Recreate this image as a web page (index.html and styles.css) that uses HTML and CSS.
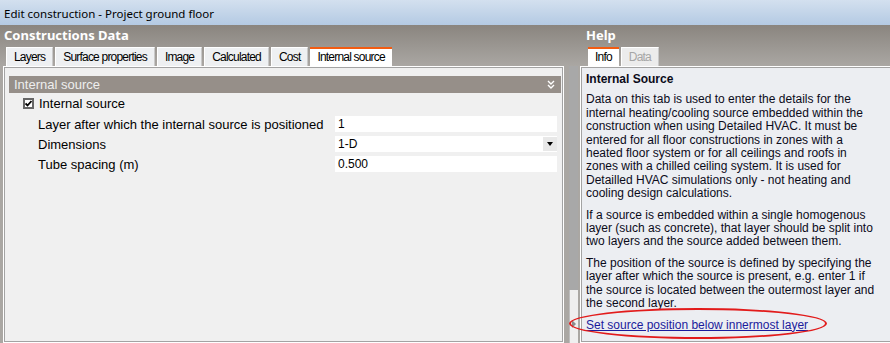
FILE: index.html
```html
<!DOCTYPE html>
<html lang="en">

<head>
    <meta charset="UTF-8">
    <title>Edit construction - Project ground floor</title>
    <link rel="stylesheet" href="styles.css">
</head>

<body>
    <div class="titlebar">Edit construction - Project ground floor</div>
    <div class="main">
        <section class="pane pane-left">
            <h2 class="pane-title">Constructions Data</h2>
            <ul class="tabs">
                <li>Layers</li>
                <li>Surface properties</li>
                <li>Image</li>
                <li>Calculated</li>
                <li>Cost</li>
                <li class="active">Internal source</li>
            </ul>
            <div class="panel">
                <div class="section-bar">
                    <span>Internal source</span>
                    <svg class="chev" width="8" height="9" viewBox="0 0 8 9">
                        <polyline points="1,1 4,4 7,1" />
                        <polyline points="1,5 4,8 7,5" />
                    </svg>
                </div>
                <div class="check-row">
                    <span class="box">
                        <svg width="7" height="7" viewBox="0 0 7 7">
                            <polyline points="0.5,3.5 2.5,5.5 6.5,1" />
                        </svg>
                    </span>
                    <span>Internal source</span>
                </div>
                <div class="row">
                    <span class="lbl">Layer after which the internal source is positioned</span>
                    <div class="field">1</div>
                </div>
                <div class="row">
                    <span class="lbl">Dimensions</span>
                    <div class="field select">1-D<span class="drop"></span></div>
                </div>
                <div class="row">
                    <span class="lbl">Tube spacing (m)</span>
                    <div class="field">0.500</div>
                </div>
            </div>
        </section>
        <div class="splitter">
            <div class="thumb"></div>
            <div class="track"><span class="arrow"></span></div>
        </div>
        <section class="pane pane-right">
            <h2 class="pane-title">Help</h2>
            <ul class="tabs">
                <li class="active">Info</li>
                <li class="disabled">Data</li>
            </ul>
            <div class="panel help">
                <h3>Internal Source</h3>
                <p>Data on this tab is used to enter the details for the<br>
                    internal heating/cooling source embedded within the<br>
                    construction when using Detailed HVAC. It must be<br>
                    entered for all floor constructions in zones with a<br>
                    heated floor system or for all ceilings and roofs in<br>
                    zones with a chilled ceiling system. It is used for<br>
                    Detailled HVAC simulations only - not heating and<br>
                    cooling design calculations.</p>
                <p>If a source is embedded within a single homogenous<br>
                    layer (such as concrete), that layer should be split into<br>
                    two layers and the source added between them.</p>
                <p>The position of the source is defined by specifying the<br>
                    layer after which the source is present, e.g. enter 1 if<br>
                    the source is located between the outermost layer and<br>
                    the second layer.</p>
                <a href="#">Set source position below innermost layer</a>
            </div>
        </section>
    </div>
    <div class="mark"></div>
</body>

</html>
```

FILE: styles.css
```css
html,
body {
    margin: 0;
    padding: 0;
}

body {
    position: relative;
    width: 890px;
    height: 343px;
    overflow: hidden;
    font: 12px "Liberation Sans", Arial, sans-serif;
    color: #000;
    background: #aaa7a3;
}

.titlebar {
    height: 25px;
    box-sizing: border-box;
    padding: 5px 0 0 4px;
    font: 11.5px "Noto Sans", sans-serif;
    line-height: 17px;
    background: linear-gradient(#d3e0ef, #b4cae3);
}

.main {
    display: flex;
    height: 318px;
    background: linear-gradient(#8a857f, #aaa7a3 41px, #aaa7a3);
}

.pane {
    display: flex;
    flex-direction: column;
    flex-shrink: 0;
}

.pane-left {
    width: 567px;
}

.pane-right {
    width: 330px;
}

.pane-title {
    margin: 0;
    height: 22px;
    padding-left: 4px;
    font: bold 13px "Noto Sans", sans-serif;
    line-height: 20px;
    color: #fff;
}

.pane-right .pane-title {
    padding-left: 6px;
}

.tabs {
    display: flex;
    gap: 2px;
    list-style: none;
    margin: 0;
    padding: 0 0 0 6px;
    height: 19px;
}

.pane-right .tabs {
    padding-left: 8px;
}

.tabs li {
    box-sizing: border-box;
    height: 19px;
    padding: 1px 7px 0;
    background: #eef0f2;
    border: 1px solid #fff;
    border-bottom: none;
    border-right-color: #c9c9c9;
    line-height: 17px;
    letter-spacing: -0.8px;
}

.tabs li.active {
    background: #fff;
    border: none;
    border-top: 2px solid #f25c12;
    padding: 0 7px;
    height: 20px;
}

.tabs li.disabled {
    color: #a6a6a6;
    background: #ececec;
}

.panel {
    flex: 1;
    margin: 0 3px;
    border: 1px solid #fff;
    box-shadow: inset 0 0 0 1px #a3a3a3;
    background: #f0f0f0;
    padding: 9px 2px 0 5px;
    font-size: 13px;
}

.section-bar {
    display: flex;
    justify-content: space-between;
    align-items: center;
    height: 17px;
    padding: 0 6px 0 5px;
    background: #968f89;
    color: #eeeeee;
}

.chev polyline {
    fill: none;
    stroke: #fff;
    stroke-width: 1.4;
}

.check-row {
    display: flex;
    align-items: center;
    height: 21px;
    padding-left: 14px;
}

.box {
    display: flex;
    align-items: center;
    justify-content: center;
    width: 7px;
    height: 7px;
    border: 2px solid #666;
    background: #fff;
    margin-right: 5px;
}

.box polyline {
    fill: none;
    stroke: #000;
    stroke-width: 1.8;
}

.row {
    display: flex;
    align-items: center;
    height: 20px;
    padding-left: 29px;
}

.lbl {
    width: 297px;
    flex-shrink: 0;
}

.field {
    position: relative;
    width: 219px;
    height: 16px;
    padding-left: 3px;
    line-height: 16px;
    background: #fff;
    font-size: 12px;
}

.drop {
    position: absolute;
    right: 0;
    top: 1px;
    width: 14px;
    height: 14px;
    background: #e8e8e8;
}

.drop::after {
    content: "";
    position: absolute;
    left: 4px;
    top: 5px;
    border-left: 3px solid transparent;
    border-right: 3px solid transparent;
    border-top: 4px solid #000;
}

.splitter {
    width: 13px;
    flex-shrink: 0;
    padding-top: 41px;
    display: flex;
    flex-direction: column;
    align-items: center;
}

.thumb {
    width: 9px;
    height: 224px;
    background: #a8a8a8;
}

.track {
    flex: 1;
    width: 9px;
    background: #efefef;
    border-left: 1px solid #bdbdbd;
    box-sizing: border-box;
    padding-top: 30px;
}

.arrow {
    display: block;
    margin-left: 2px;
    width: 0;
    height: 0;
    border-top: 4px solid transparent;
    border-bottom: 4px solid transparent;
    border-left: 4px solid #8c8c8c;
}

.help {
    margin: 0;
    padding: 6px 8px 0 5px;
    background: #eceef2;
    color: #0b0b1a;
    line-height: 13.4px;
    font-size: 12px;
}

.help h3 {
    margin: 0 0 7px;
    font-size: 12px;
    font-weight: bold;
    line-height: 13.4px;
}

.help p {
    margin: 0 0 8px;
}

.help a {
    display: block;
    margin-top: 5px;
    color: #1b1b9c;
}

.mark {
    position: absolute;
    left: 569px;
    top: 308px;
    width: 254px;
    height: 27px;
    border: 2px solid #e21b1b;
    border-radius: 50%;
}
```
